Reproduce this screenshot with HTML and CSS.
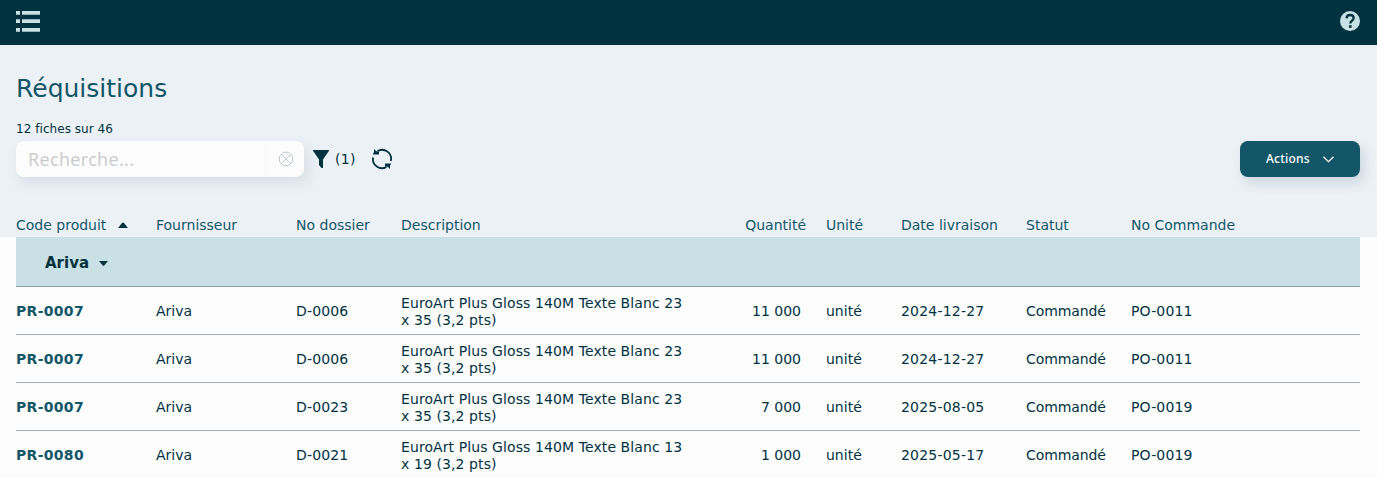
FILE: index.html
```html
<!DOCTYPE html>
<html lang="fr">
<head>
<meta charset="utf-8">
<title>Réquisitions</title>
<link rel="stylesheet" href="styles.css">
</head>
<body>
<header class="topbar">
  <svg class="menu" width="24" height="21" viewBox="0 0 24 21" fill="#c9e0e4"><path d="M0 0h4v3.700H0zM6 0h18v3.700H6zM0 8.200h4V12H0zM6 8.200h18V12H6zM0 17h4v3.700H0zM6 17h18v3.700H6z"/></svg>
  <svg width="20" height="20" viewBox="0 0 20 20"><circle cx="10" cy="10" r="10" fill="#c9e0e4"/><path d="M6.500 7.300C6.700 5.300 8 4 10 4s3.700 1.200 3.700 3.100c0 2.500-3.400 2.700-3.400 5.400" fill="none" stroke="#00323f" stroke-width="2.300"/><path d="M9 14.200h2.600v2.600H9z" fill="#00323f"/></svg>
</header>
<section class="head">
  <h1 class="title"><span>Réquisitions</span></h1>
  <div class="count"><span>12 fiches sur 46</span></div>
  <div class="tools">
    <div class="search">
      <span class="placeholder">Recherche...</span>
      <span class="clear"><svg width="16" height="16" viewBox="0 0 16 16" fill="none" stroke="#bcc7ce"><circle cx="8" cy="8" r="6.800"/><path d="M3.500 3.500l9 9M12.500 3.500l-9 9"/></svg></span>
    </div>
    <svg class="filter" width="16" height="18" viewBox="0 0 16 18" fill="#00323f"><path d="M0 0h16v.8L10 9.500V18H8.500L6 15V9.500L0 .8z"/></svg>
    <span class="filter-count">(1)</span>
    <svg class="refresh" width="22" height="22" viewBox="0 0 22 22" fill="none" stroke="#00323f" stroke-width="1.800"><path d="M6.500 3.100A9 9 0 0 1 19.800 13M2.100 9.500A9 9 0 0 0 15.500 18.900"/><path d="M3 1v3L1.800 6.500H8V4L5 3zM19 21v-3l1.200-2.500H14V18l3 1z" fill="#00323f" stroke="none"/></svg>
    <button class="actions"><span>Actions</span><svg width="11" height="7" viewBox="0 0 11 7" fill="none" stroke="#fff" stroke-width="1.300"><path d="M.5 .7l5 5 5-5"/></svg></button>
  </div>
  <div class="row columns">
    <span>Code produit<svg class="sort" width="10" height="6" viewBox="0 0 10 6" fill="#00323f"><path d="M0 6h10L6 1Q5 0 4 1z"/></svg></span><span>Fournisseur</span><span>No dossier</span><span>Description</span><span class="qty-head">Quantité</span><span>Unité</span><span>Date livraison</span><span>Statut</span><span>No Commande</span>
  </div>
</section>
<main class="list">
  <div class="group"><span>Ariva</span><svg width="9" height="5" viewBox="0 0 9 5" fill="#00323f"><path d="M0 0h9L5.200 4.500q-.7 .7-1.400 0z"/></svg></div>
  <div class="row record"><b>PR-0007</b><span>Ariva</span><span class="code">D-0006</span><span class="desc">EuroArt Plus Gloss 140M Texte Blanc 23<br>x 35 (3,2 pts)</span><span class="qty">11 000</span><span>unité</span><span class="date">2024-12-27</span><span class="status">Commandé</span><span class="code">PO-0011</span></div>
  <div class="row record"><b>PR-0007</b><span>Ariva</span><span class="code">D-0006</span><span class="desc">EuroArt Plus Gloss 140M Texte Blanc 23<br>x 35 (3,2 pts)</span><span class="qty">11 000</span><span>unité</span><span class="date">2024-12-27</span><span class="status">Commandé</span><span class="code">PO-0011</span></div>
  <div class="row record"><b>PR-0007</b><span>Ariva</span><span class="code">D-0023</span><span class="desc">EuroArt Plus Gloss 140M Texte Blanc 23<br>x 35 (3,2 pts)</span><span class="qty">7 000</span><span>unité</span><span class="date">2025-08-05</span><span class="status">Commandé</span><span class="code">PO-0019</span></div>
  <div class="row record"><b>PR-0080</b><span>Ariva</span><span class="code">D-0021</span><span class="desc">EuroArt Plus Gloss 140M Texte Blanc 13<br>x 19 (3,2 pts)</span><span class="qty">1 000</span><span>unité</span><span class="date">2025-05-17</span><span class="status">Commandé</span><span class="code">PO-0019</span></div>
</main>
</body>
</html>
```
FILE: styles.css
```css
* { box-sizing: border-box; }
body {
  margin: 0;
  height: 478px;
  overflow: hidden;
  background: #fcfcfc;
  color: #00323f;
  font: 14px/17px Verdana, "DejaVu Sans", sans-serif;
}
svg { display: block; flex: none; }
.topbar {
  height: 45px;
  padding: 11px 17px 0 16px;
  display: flex;
  justify-content: space-between;
  background: #00323f;
}
.head { height: 192px; background: #ecf1f6; padding: 28px 17px 0 16px; }
.title { margin: 0; font-size: 25px; line-height: 32px; font-weight: 400; color: #125668; }
.count { margin-top: 16px; font-size: 12px; line-height: 17px; letter-spacing: .05px; }
.tools { display: flex; align-items: center; height: 36px; margin-top: 3px; }
.search {
  width: 288px;
  height: 36px;
  display: flex;
  align-items: center;
  justify-content: space-between;
  padding-left: 12px;
  border-radius: 8px;
  background: #fcfcfc;
  box-shadow: 4px 6px 14px rgba(60, 95, 130, .13);
}
.placeholder { font: 18px/24px "Noto Sans", sans-serif; letter-spacing: .3px; color: #ccc; }
.clear { width: 38px; height: 36px; padding: 10px 0 0 11px; border-left: 1px solid #f8f9f9; }
.filter { margin-left: 9px; }
.filter-count { margin-left: 6px; letter-spacing: .3px; }
.refresh { margin-left: 15.5px; }
.actions {
  width: 120px;
  height: 36px;
  margin-left: auto;
  padding: 0 26px;
  display: flex;
  align-items: center;
  justify-content: space-between;
  border: 0;
  border-radius: 8px;
  background: #125668;
  color: #fff;
  font: 500 12px/16px "Noto Sans", sans-serif;
  letter-spacing: .2px;
  box-shadow: 4px 6px 12px rgba(60, 95, 130, .18);
}
.row {
  display: grid;
  grid-template-columns: 140px 140px 105px 320px 105px 75px 125px 105px 1fr;
  align-items: center;
  white-space: nowrap;
}
.columns { margin-top: 36px; height: 24px; color: #125668; }
.sort { display: inline-block; margin: 0 0 2px 12px; }
.qty-head { padding-right: 20px; justify-self: end; }
.qty { padding-right: 25px; justify-self: end; }
.list { padding: 0 17px 0 16px; }
.group {
  height: 50px;
  padding: 3px 0 0 29px;
  display: flex;
  align-items: center;
  gap: 10px;
  background: #c9e0e4;
  border-bottom: 1px solid #8ba0ad;
  font-weight: 700;
  font-size: 15px;
}
.record { height: 48px; padding-top: 2px; border-bottom: 1px solid #a1afbb; }
.record b { color: #125668; letter-spacing: .3px; }
.code { letter-spacing: .15px; }
.date { letter-spacing: .2px; }
.status { letter-spacing: -.1px; }
.desc { padding-top: 1px; letter-spacing: .09px; }
```
